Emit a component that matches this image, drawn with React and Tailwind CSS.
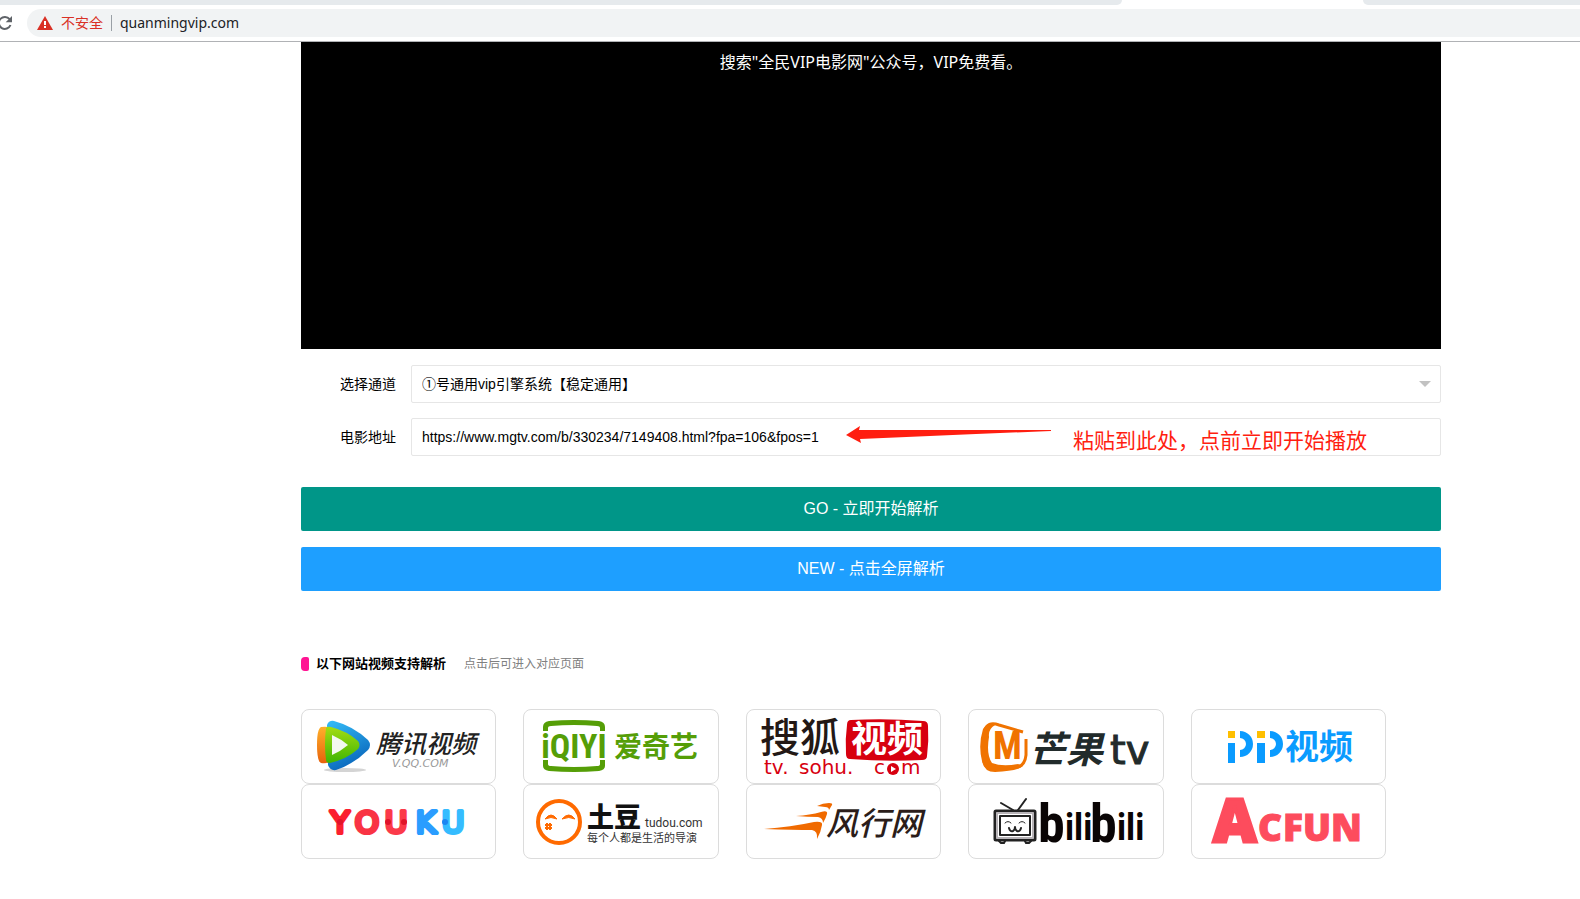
import React, { useState } from "react";

const CJK = '"Liberation Sans", "Noto Sans CJK SC", sans-serif';
const NARROW = '"Roboto Condensed", Roboto, sans-serif';

const channels = [
  "①号通用vip引擎系统【稳定通用】",
  "②号通用vip引擎系统",
  "③号通用vip引擎系统",
];

const TencentLogo = () => (
  <>
    <defs>
      <linearGradient id="qqBlue" x1="0" y1="0" x2="0.4" y2="1">
        <stop offset="0" stopColor="#35bdf8" />
        <stop offset="1" stopColor="#0a68bd" />
      </linearGradient>
      <linearGradient id="qqGreen" x1="0" y1="0" x2="0" y2="1">
        <stop offset="0" stopColor="#a4dc12" />
        <stop offset="1" stopColor="#3fb503" />
      </linearGradient>
      <linearGradient id="qqOrange" x1="0" y1="0" x2="0" y2="1">
        <stop offset="0" stopColor="#ffb02a" />
        <stop offset="1" stopColor="#e8620c" />
      </linearGradient>
    </defs>
    <ellipse cx="44" cy="61" rx="21" ry="2" fill="#d4d4d4" />
    <path
      d="M20 18 Q26 17 30 19 V52 Q26 55 20 54 Q16 52 16 36 Q16 20 20 18Z"
      fill="url(#qqOrange)"
    />
    <path
      d="M26 16 Q28 11 33 12 Q52 17 67 31 Q71 36 67 41 Q53 55 35 61 Q29 62 27 56Z"
      fill="url(#qqBlue)"
    />
    <path
      d="M25 19 Q26 17 30 18 Q46 22 57 32 Q60 36 57 40 Q46 50 29 54 Q25 54 25 51 Q23 35 25 19Z"
      fill="url(#qqGreen)"
    />
    <path d="M31 26 Q40 30 47 36 Q40 42 31 46Z" fill="#f4f8f0" />
    <text
      x="75"
      y="44"
      fontSize="25"
      fontWeight="500"
      fontStyle="italic"
      fill="#222"
    >
      腾讯视频
    </text>
    <text
      x="91"
      y="58"
      fontSize="11"
      fontStyle="italic"
      fontFamily='"DejaVu Sans", sans-serif'
      fill="#999"
    >
      V.QQ.COM
    </text>
  </>
);

const IqiyiLogo = () => (
  <g fill="#559e07">
    <path d="M20 22 V18 Q20 13 26 12 Q51 10 76 12 Q82 13 82 18 V22 H77 V19 Q77 17 74 17 Q51 15 28 17 Q25 17 25 19 V22Z" />
    <path d="M20 51 V57 Q20 61 26 62 Q51 64 76 62 Q82 61 82 57 V51 H77 V55 Q77 57 74 57 Q51 59 28 57 Q25 57 25 55 V51Z" />
    <text
      x="51"
      y="49"
      fontSize="34"
      fontWeight="700"
      fontFamily={NARROW}
      textAnchor="middle"
    >
      iQIYI
    </text>
    <text x="91" y="48" fontSize="28" fontWeight="700">
      爱奇艺
    </text>
  </g>
);

const SohuLogo = () => (
  <>
    <text x="14" y="43" fontSize="40" fontWeight="500" fill="#231815">
      搜狐
    </text>
    <path
      d="M105 11 Q140 9 177 12 Q182 12 182 17 Q183 32 181 47 Q181 51 176 51 Q140 53 104 50 Q100 50 100 45 Q99 30 101 16 Q101 11 105 11Z"
      fill="#d7000f"
    />
    <text x="105" y="43" fontSize="36" fontWeight="700" fill="#fff">
      视频
    </text>
    <g fontSize="20" fontFamily='"DejaVu Sans", sans-serif' fill="#d7000f">
      <text x="18" y="65">
        tv.
      </text>
      <text x="53" y="65">
        sohu.
      </text>
      <text x="128" y="65">
        c
      </text>
      <text x="155" y="65">
        m
      </text>
    </g>
    <circle cx="147" cy="60" r="6" fill="#d7000f" />
    <path d="M145 57 L150 60 L145 63Z" fill="#fff" />
  </>
);

const MangoLogo = () => (
  <>
    <path
      d="M55 23 L31 16 Q19 12 17 22 Q13 38 16 52 Q18 62 29 60 L50 58 Q57 56 58 46 L58 30"
      fill="none"
      stroke="#f07300"
      strokeWidth="3"
      strokeLinejoin="round"
    />
    <path
      d="M15 20 Q20 12 27 16 Q20 20 21 28 Q18 45 24 54 Q34 58 50 55 L55 57 Q50 62 27 63 Q16 63 14 52 Q10 36 15 20Z"
      fill="#f07300"
    />
    <text
      x="25"
      y="50"
      fontSize="38"
      fontWeight="700"
      fontFamily={NARROW}
      fill="#f07300"
    >
      M
    </text>
    <text
      x="61"
      y="54"
      fontSize="37"
      fontWeight="700"
      fontStyle="italic"
      fill="#222b2b"
    >
      芒果
    </text>
    <text
      x="142"
      y="55"
      fontSize="40"
      fontFamily='"DejaVu Sans", sans-serif'
      fill="#222b2b"
      stroke="#222b2b"
    >
      tv
    </text>
  </>
);

const PpLogo = () => (
  <>
    <g fill="#ffbf00">
      <rect x="38" y="22" width="7" height="7" />
      <rect x="67" y="22" width="8" height="7" />
    </g>
    <g fill="#0a9bff">
      <rect x="38" y="34" width="7" height="20" />
      <rect x="67" y="34" width="8" height="20" />
      <path d="M50 22 A13 13 0 0 1 50 48 V41 A6 6 0 0 0 50 29Z" />
      <path d="M80 22 A13 13 0 0 1 80 48 V41 A6 6 0 0 0 80 29Z" />
      <text x="95" y="50" fontSize="34" fontWeight="700">
        视频
      </text>
    </g>
  </>
);

const YoukuLogo = () => (
  <>
    <g
      fontSize="31"
      fontFamily='"DejaVu Sans", sans-serif'
      textAnchor="middle"
      strokeWidth="4"
      strokeLinejoin="round"
      strokeLinecap="round"
    >
      <text x="39" y="49" fill="#fb1f2f" stroke="#fb1f2f">
        Y
      </text>
      <text x="66" y="49" fill="#f93344" stroke="#f93344">
        O
      </text>
      <text x="95" y="49" fill="#fb3a4a" stroke="#fb3a4a">
        U
      </text>
      <text x="125" y="49" fill="#2a9dff" stroke="#2a9dff">
        K
      </text>
      <text x="152" y="49" fill="#35bcff" stroke="#35bcff">
        U
      </text>
    </g>
    <g fill="#e0142a">
      <circle cx="39" cy="38" r="3" />
      <circle cx="87" cy="38" r="3" />
      <circle cx="103" cy="38" r="3" />
    </g>
    <circle cx="144" cy="38" r="3" fill="#1c86f2" />
  </>
);

const TudouLogo = () => (
  <>
    <circle
      cx="36"
      cy="38"
      r="21"
      fill="none"
      stroke="#ff6a00"
      strokeWidth="4"
    />
    <path
      d="M22 35 Q28 27 34 35 Q28 32 22 35Z M39 35 Q46 27 52 35 Q46 32 39 35Z"
      fill="#ff6a00"
      stroke="#ff6a00"
    />
    <path
      d="M22 41 H29 M22 44 H29 M24 39 V46 M27 39 V46"
      stroke="#ff6a00"
      strokeWidth="2"
    />
    <text x="64" y="43" fontSize="27" fontWeight="900" fill="#111">
      土豆
    </text>
    <text
      x="122"
      y="43"
      fontSize="12"
      fontFamily="Roboto, sans-serif"
      fill="#333"
    >
      tudou.com
    </text>
    <text x="64" y="58" fontSize="11" fill="#333">
      每个人都是生活的导演
    </text>
  </>
);

const FunshionLogo = () => (
  <>
    <g fill="#f06a00">
      <path d="M18 45 Q45 43 68 38 Q77 37 76 41 Q75 48 71 55 Q72 47 66 46 Q48 46 18 45Z" />
      <path d="M50 32 Q64 31 75 28 Q82 26 81 30 Q80 34 77 39 Q77 34 72 33 Q62 33 50 32Z" />
      <path d="M71 22 Q77 19 83 19 Q87 19 86 21 L83 26 Q83 23 79 23Z" />
    </g>
    <text
      x="80"
      y="51"
      fontSize="32"
      fontWeight="500"
      fontStyle="italic"
      fill="#2b1d1a"
    >
      风行网
    </text>
  </>
);

const BilibiliLogo = () => (
  <>
    <g fill="none" stroke="#222" strokeLinecap="round" strokeLinejoin="round">
      <path d="M45 26 L33 19 M50 26 L58 15" strokeWidth="2" />
      <path
        d="M31 57 L33 59 H36 L37 57 M57 57 L58 59 H61 L63 57"
        strokeWidth="2"
      />
      <rect x="27" y="27" width="40" height="29" rx="1" strokeWidth="3" />
      <rect
        x="29"
        y="29"
        width="36"
        height="25"
        stroke="#b8b4b8"
        strokeWidth="2"
      />
      <rect x="32" y="32" width="30" height="19" strokeWidth="2" />
      <path d="M37 39 Q40 36 43 39 M51 39 Q54 36 57 39" strokeWidth="1" />
      <path
        d="M41 44 Q42 48 45 47 Q47 46 47 43 Q47 46 49 47 Q52 48 53 44"
        strokeWidth="2"
      />
    </g>
    <g fontWeight="700" fontFamily={NARROW} fill="#0a0505">
      <text x="70" y="58" fontSize="54">
        b
      </text>
      <text x="97" y="56" fontSize="36">
        ili
      </text>
      <text x="122" y="58" fontSize="54">
        b
      </text>
      <text x="149" y="56" fontSize="36">
        ili
      </text>
    </g>
  </>
);

const AcfunLogo = () => (
  <g
    fontWeight="800"
    fontFamily='"Open Sans", sans-serif'
    fill="#fd4c5d"
    stroke="#fd4c5d"
  >
    <text x="23" y="58" fontSize="60" strokeWidth="3">
      A
    </text>
    <text x="68" y="57" fontSize="37">
      C
    </text>
    <text x="93" y="57" fontSize="37">
      FUN
    </text>
  </g>
);

const sites = [
  { name: "腾讯视频", href: "https://v.qq.com", Logo: TencentLogo },
  { name: "爱奇艺", href: "https://www.iqiyi.com", Logo: IqiyiLogo },
  { name: "搜狐视频", href: "https://tv.sohu.com", Logo: SohuLogo },
  { name: "芒果tv", href: "https://www.mgtv.com", Logo: MangoLogo },
  { name: "PP视频", href: "https://www.pptv.com", Logo: PpLogo },
  { name: "YOUKU", href: "https://www.youku.com", Logo: YoukuLogo },
  { name: "土豆", href: "https://www.tudou.com", Logo: TudouLogo },
  { name: "风行网", href: "https://www.fun.tv", Logo: FunshionLogo },
  { name: "bilibili", href: "https://www.bilibili.com", Logo: BilibiliLogo },
  { name: "AcFun", href: "https://www.acfun.cn", Logo: AcfunLogo },
];

const BrowserBar = () => (
  <header className="border-b border-[#b0b2b5] bg-white font-['Noto_Sans','Noto_Sans_CJK_SC',sans-serif]">
    <div className="flex h-[5px]">
      <div className="w-[71%] rounded-br-lg bg-[#e6eaed]" />
      <div className="w-[241px]" />
      <div className="grow rounded-bl-lg bg-[#e6eaed]" />
    </div>
    <div className="flex h-9 items-center overflow-hidden">
      <button aria-label="重新加载" className="-ml-1 w-[31px] shrink-0">
        <svg width="18" height="18" viewBox="0 0 18 18">
          <path
            d="M14.5 11 A6 6 0 1 1 13.6 5.2 L15 6.6"
            fill="none"
            stroke="#5f6368"
            strokeWidth="2"
          />
          <path d="M16 2 V8.3 H9.7Z" fill="#5f6368" />
        </svg>
      </button>
      <div className="flex h-7 grow items-center rounded-l-full bg-[#f1f3f4] pl-[10px] text-sm">
        <svg width="16" height="14" viewBox="0 0 16 14">
          <path d="M8 0 L16 14 H0Z" fill="#d93025" />
          <path d="M7 5 H9 V9 H7Z M7 10 H9 V12 H7Z" fill="#fff" />
        </svg>
        <span className="ml-2 text-[#d93025]">不安全</span>
        <span className="mx-2 h-4 w-px bg-[#9aa0a6]" />
        <input
          aria-label="地址"
          defaultValue="quanmingvip.com"
          className="min-w-0 grow bg-transparent text-[#202124] outline-none"
        />
      </div>
    </div>
  </header>
);

// red arrow and hint laid over the address field
const PasteHint = () => (
  <div className="pointer-events-none absolute top-2 left-[435px] flex gap-[22px] text-[#ff1e10]">
    <svg width="205" height="17" viewBox="0 0 205 17">
      <path
        d="M0 9 L14 0 L13 4 L205 4 V5 L130 8 L14 13 L15 17Z"
        fill="#ff1e10"
      />
    </svg>
    <span className="text-[21px] leading-[30px] whitespace-nowrap">
      粘贴到此处，点前立即开始播放
    </span>
  </div>
);

const ParseForm = () => {
  const [channel, setChannel] = useState(channels[0]);
  const [url, setUrl] = useState(
    "https://www.mgtv.com/b/330234/7149408.html?fpa=106&fpos=1",
  );

  return (
    <form className="pt-4" onSubmit={(e) => e.preventDefault()}>
      <div className="mb-[15px] flex items-center">
        <label
          htmlFor="channel"
          className="w-[110px] shrink-0 pr-[15px] text-right text-sm"
        >
          选择通道
        </label>
        <div className="relative grow">
          <select
            id="channel"
            value={channel}
            onChange={(e) => setChannel(e.target.value)}
            className="block h-[38px] w-full appearance-none rounded-xs border border-[#e6e6e6] bg-white pl-[10px] text-sm"
          >
            {channels.map((name) => (
              <option key={name}>{name}</option>
            ))}
          </select>
          <svg
            className="pointer-events-none absolute top-4 right-[10px]"
            width="12"
            height="6"
            viewBox="0 0 12 6"
          >
            <path d="M0 0 H12 L6 6Z" fill="#c2c2c2" />
          </svg>
        </div>
      </div>
      <div className="mb-[31px] flex items-center">
        <label
          htmlFor="url"
          className="w-[110px] shrink-0 pr-[15px] text-right text-sm"
        >
          电影地址
        </label>
        <div className="relative grow">
          <input
            id="url"
            type="text"
            value={url}
            onChange={(e) => setUrl(e.target.value)}
            className="block h-[38px] w-full rounded-xs border border-[#e6e6e6] bg-white pl-[10px] text-sm"
          />
          <PasteHint />
        </div>
      </div>
      <button
        type="submit"
        className="mb-4 block h-11 w-full rounded-xs bg-[#009688] text-white"
      >
        GO - 立即开始解析
      </button>
      <button
        type="button"
        className="block h-11 w-full rounded-xs bg-[#1e9fff] text-white"
      >
        NEW - 点击全屏解析
      </button>
    </form>
  );
};

export default function App() {
  return (
    <div className="min-h-screen bg-white font-['Liberation_Sans','Noto_Sans_CJK_SC',sans-serif] text-black">
      <BrowserBar />
      <main className="pr-[139px] pl-[301px]">
        <section className="h-[307px] bg-black pt-2 text-center font-['Noto_Sans','Noto_Sans_CJK_SC',sans-serif] text-white">
          搜索"全民VIP电影网"公众号，VIP免费看。
        </section>
        <ParseForm />
        <div className="mt-[62px] flex items-center">
          <span className="h-[14px] w-2 rounded-l-sm rounded-r-xs bg-[#ff1493]" />
          <h2 className="ml-[7px] text-[13px] leading-[22px] font-bold">
            以下网站视频支持解析
          </h2>
          <span className="ml-[18px] text-xs text-[#808080]">
            点击后可进入对应页面
          </span>
        </div>
        <nav className="mt-[34px] mr-[55px] grid grid-cols-5 gap-x-[27px]">
          {sites.map(({ name, href, Logo }) => (
            <a
              key={name}
              href={href}
              aria-label={name}
              className="flex h-[75px] justify-center rounded-lg border border-[#dcdcdc]"
            >
              <svg
                width="194"
                height="73"
                viewBox="1 1 194 73"
                fontFamily={CJK}
                className="shrink-0 overflow-visible"
              >
                <Logo />
              </svg>
            </a>
          ))}
        </nav>
      </main>
    </div>
  );
}
